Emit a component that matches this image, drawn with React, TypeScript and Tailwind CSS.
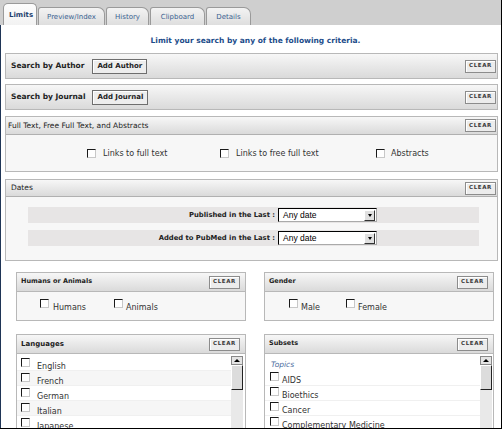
import React from "react";

const tabs = [
  { label: "Preview/Index", w: "w-[67px]" },
  { label: "History", w: "w-[43px]" },
  { label: "Clipboard", w: "w-[55px]" },
  { label: "Details", w: "w-[45px]" },
];

function Box() {
  return (
    <span className="inline-block w-[9px] h-[9px] shrink-0 bg-white border border-t-[#1a1a1a] border-l-[#1a1a1a] border-r-[#c8c8c8] border-b-[#c8c8c8]" />
  );
}

function Clear() {
  return (
    <span className="ml-auto flex items-center justify-center w-[31px] h-[13px] bg-[#ececec] border border-[#8c8c8c] shadow-[inset_1px_1px_0_#fff] text-[5.5px] leading-none font-bold tracking-[0.6px] text-[#3a3a3a]">
      CLEAR
    </span>
  );
}

function Scrollbar() {
  return (
    <div className="w-[12px] flex flex-col shrink-0">
      <div className="h-[9px] bg-[#e4e4e4] border border-[#888] flex items-center justify-center">
        <span className="w-0 h-0 border-l-[3px] border-r-[3px] border-b-[3px] border-l-transparent border-r-transparent border-b-black" />
      </div>
      <div className="h-[25px] bg-[#dcdcdc] border border-t-[#fff] border-l-[#fff] border-r-[#222] border-b-[#222]" />
      <div className="flex-1 bg-[#e9e9e9]" />
    </div>
  );
}

function Select() {
  return (
    <div className="ml-[3px] w-[99px] h-[14px] bg-white border border-t-[#000] border-l-[#000] border-r-[#aaa] border-b-[#aaa] flex items-center">
      <span className="flex-1 pl-[4px] text-[8.5px] font-normal leading-none text-black font-['Liberation_Sans',Arial,sans-serif]">Any date</span>
      <span className="w-[11px] h-[11px] mr-[1px] bg-[#e0e0e0] border border-t-[#fff] border-l-[#fff] border-r-[#333] border-b-[#333] flex items-center justify-center">
        <span className="w-0 h-0 border-l-[2.5px] border-r-[2.5px] border-t-[3px] border-l-transparent border-r-transparent border-t-black" />
      </span>
    </div>
  );
}

const hdr = "bg-linear-to-b from-[#f7f7f7] to-[#dadada]";

export default function App() {
  return (
    <div className="w-[502px] h-[429px] overflow-hidden bg-[#cfcfcf] border-r border-b border-black flex flex-col font-['DejaVu_Sans',Verdana,sans-serif] text-[#222]">
      {/* tabs */}
      <div className="h-[25px] flex items-end pl-[3px] shrink-0">
        <div className="w-[34px] h-[22px] rounded-t-[5px] border border-b-0 border-[#9a9a9a] bg-linear-to-b from-[#fdfdfd] to-[#f2f2f2] text-[7px] font-bold text-[#1d3f6e] pl-[5px] pt-[8px] leading-none">
          Limits
        </div>
        {tabs.map((t) => (
          <div
            key={t.label}
            className={`${t.w} h-[18px] ml-[1px] rounded-tl-[3px] rounded-tr-[7px] border border-b-0 border-[#9a9a9a] bg-linear-to-b from-[#f3f3f3] to-[#dedede] text-[7px] text-[#3a6291] flex items-center justify-center pt-[2px]`}
          >
            {t.label}
          </div>
        ))}
      </div>

      {/* content */}
      <div className="flex-1 bg-white border-l border-[#1f3556] pl-[4px] pr-[3px] flex flex-col">
        <p className="pt-[10px] h-[28px] text-center text-[7.5px] leading-[12px] font-bold text-[#1c4c8a] pl-[8px]">
          Limit your search by any of the following criteria.
        </p>

        {/* author */}
        <div className={`h-[26px] border border-[#b8b8b8] ${hdr} flex items-center pl-[5px] pr-[1px]`}>
          <span className="text-[7.5px] font-bold">Search by Author</span>
          <span className="ml-[8px] h-[15px] px-[4px] border border-[#6e6e6e] bg-[#ededed] shadow-[inset_1px_1px_0_#fff] text-[7px] font-bold flex items-center">Add Author</span>
          <Clear />
        </div>

        {/* journal */}
        <div className={`mt-[5px] h-[26px] border border-[#b8b8b8] ${hdr} flex items-center pl-[5px] pr-[1px]`}>
          <span className="text-[7.5px] font-bold">Search by Journal</span>
          <span className="ml-[7px] h-[15px] px-[4px] border border-[#6e6e6e] bg-[#ededed] shadow-[inset_1px_1px_0_#fff] text-[7px] font-bold flex items-center">Add Journal</span>
          <Clear />
        </div>

        {/* full text */}
        <div className="mt-[6px] border border-[#b8b8b8] bg-[#f7f7f7]">
          <div className={`h-[18px] ${hdr} border-b border-[#b0b0b0] flex items-center pl-[2px] pr-[1px]`}>
            <span className="text-[7.5px]">Full Text, Free Full Text, and Abstracts</span>
            <Clear />
          </div>
          <div className="h-[36px] flex items-center pl-[81px] text-[8px] text-[#333]">
            <div className="w-[133px] flex items-center"><Box /><span className="ml-[7px] mt-[2px]">Links to full text</span></div>
            <div className="w-[156px] flex items-center"><Box /><span className="ml-[7px] mt-[2px]">Links to free full text</span></div>
            <div className="flex items-center"><Box /><span className="ml-[6px] mt-[2px]">Abstracts</span></div>
          </div>
        </div>

        {/* dates */}
        <div className="mt-[7px] border border-[#b8b8b8] bg-[#f7f7f7]">
          <div className={`h-[17px] ${hdr} border-b border-[#b0b0b0] flex items-center pl-[5px] pr-[1px]`}>
            <span className="text-[7.5px]">Dates</span>
            <Clear />
          </div>
          <div className="pt-[10px] pb-[14px] pl-[22px] pr-[18px] flex flex-col gap-[7px] text-[6.8px] font-bold">
            <div className="h-[16px] bg-[#e7e5e5] flex items-center">
              <span className="w-[247px] text-right">Published in the Last :</span>
              <Select />
            </div>
            <div className="h-[16px] bg-[#e7e5e5] flex items-center">
              <span className="w-[247px] text-right">Added to PubMed in the Last :</span>
              <Select />
            </div>
          </div>
        </div>

        {/* sub panels */}
        <div className="mt-[11px] pl-[11px] grid grid-cols-[230px_230px] gap-x-[18px] gap-y-[13px]">
          <div className="h-[49px] border border-[#b8b8b8] bg-[#f7f7f7]">
            <div className={`h-[19px] ${hdr} border-b border-[#b8b8b8] flex items-center pl-[4px] pr-[5px]`}>
              <span className="text-[6.5px] font-bold">Humans or Animals</span>
              <Clear />
            </div>
            <div className="flex items-start pt-[7px] pl-[23px] text-[8px] text-[#333]">
              <div className="w-[74px] flex items-start"><Box /><span className="ml-[4px] mt-[3px]">Humans</span></div>
              <div className="flex items-start"><Box /><span className="ml-[3px] mt-[3px]">Animals</span></div>
            </div>
          </div>
          <div className="h-[49px] border border-[#b8b8b8] bg-[#f7f7f7]">
            <div className={`h-[19px] ${hdr} border-b border-[#b8b8b8] flex items-center pl-[4px] pr-[5px]`}>
              <span className="text-[6.5px] font-bold">Gender</span>
              <Clear />
            </div>
            <div className="flex items-start pt-[7px] pl-[24px] text-[8px] text-[#333]">
              <div className="w-[57px] flex items-start"><Box /><span className="ml-[3px] mt-[3px]">Male</span></div>
              <div className="flex items-start"><Box /><span className="ml-[3px] mt-[3px]">Female</span></div>
            </div>
          </div>

          <div className="h-[100px] border border-[#b8b8b8] bg-white flex flex-col">
            <div className={`h-[19px] shrink-0 ${hdr} border-b border-[#b8b8b8] flex items-center pl-[4px] pr-[5px]`}>
              <span className="text-[7px] font-bold">Languages</span>
              <Clear />
            </div>
            <div className="flex-1 flex pr-[2px] pt-[2px]">
              <div className="flex-1 flex flex-col text-[8px] text-[#333]">
                {["English", "French", "German", "Italian", "Japanese"].map((l, i) => (
                  <div key={l} className={`h-[15px] shrink-0 flex items-start pl-[4px] pt-[2px] border-b border-[#f0f0f0] ${i % 2 ? "bg-[#f6f6f6]" : "bg-white"}`}>
                    <Box />
                    <span className="ml-[7px] mt-[3px]">{l}</span>
                  </div>
                ))}
              </div>
              <Scrollbar />
            </div>
          </div>

          <div className="h-[100px] border border-[#b8b8b8] bg-white flex flex-col">
            <div className={`h-[19px] shrink-0 ${hdr} border-b border-[#b8b8b8] flex items-center pl-[4px] pr-[5px]`}>
              <span className="text-[6.5px] font-bold">Subsets</span>
              <Clear />
            </div>
            <div className="flex-1 flex pr-[1px] pt-[2px]">
              <div className="flex-1 flex flex-col text-[8px] text-[#333]">
                <div className="h-[15px] pl-[6px] pt-[3px] italic text-[7.5px] text-[#4a6c9e]">Topics</div>
                {["AIDS", "Bioethics", "Cancer", "Complementary Medicine"].map((l) => (
                  <div key={l} className="h-[15px] shrink-0 flex items-start pl-[5px] pt-[1px] border-b border-[#f0f0f0]">
                    <Box />
                    <span className="ml-[3px] mt-[3px]">{l}</span>
                  </div>
                ))}
              </div>
              <Scrollbar />
            </div>
          </div>
        </div>
      </div>
    </div>
  );
}
